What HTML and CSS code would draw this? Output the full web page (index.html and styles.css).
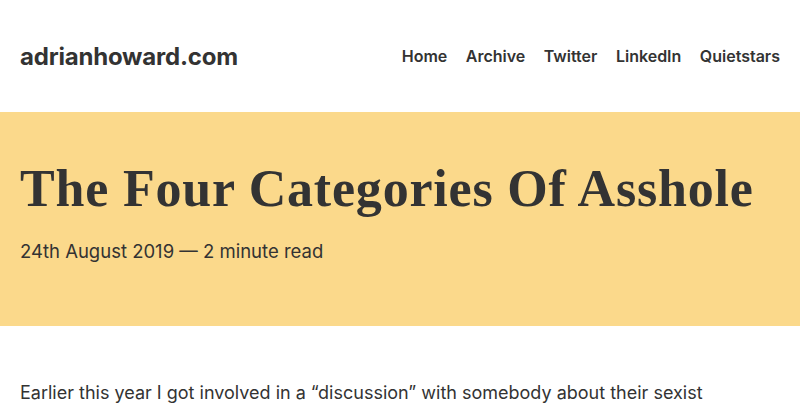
FILE: index.html
```html
<!DOCTYPE html>
<html lang="en">
<head>
<meta charset="utf-8">
<title>The Four Categories Of Asshole</title>
<link rel="stylesheet" href="styles.css">
</head>
<body>
<header class="site-header">
  <a class="logo" href="#">adrianhoward.com</a>
  <nav class="nav">
    <a href="#">Home</a>
    <a href="#">Archive</a>
    <a href="#">Twitter</a>
    <a href="#">LinkedIn</a>
    <a href="#">Quietstars</a>
  </nav>
</header>
<section class="hero">
  <h1 class="title">The Four Categories Of Asshole</h1>
  <p class="meta">24th August 2019 — 2 minute read</p>
</section>
<main class="content">
  <p>Earlier this year I got involved in a “discussion” with somebody about their sexist</p>
</main>
</body>
</html>
```
FILE: styles.css
```css
html, body {
  margin: 0;
  padding: 0;
  background: #fff;
  color: #333;
  font-family: Inter, "Noto Sans", sans-serif;
}
a { color: inherit; text-decoration: none; }
.site-header {
  height: 112px;
  display: flex;
  align-items: center;
  justify-content: space-between;
  padding: 0 20px;
}
.logo {
  font-size: 24px;
  font-weight: 700;
  letter-spacing: -0.2px;
}
.nav {
  display: flex;
  gap: 18.5px;
  font-size: 16px;
  font-weight: 600;
}
.hero {
  background: #fbd98b;
  height: 214px;
  padding: 0 20px;
  box-sizing: border-box;
  padding-top: 47px;
}
.title {
  margin: 0;
  font-family: "Liberation Serif", serif;
  font-size: 52px;
  font-weight: 700;
  line-height: 60px;
  letter-spacing: 0.8px;
  white-space: nowrap;
}
.meta {
  margin: 20px 0 0;
  font-size: 18.5px;
  line-height: 24px;
}
.content {
  padding: 0 20px;
}
.content p {
  margin: 52px 0 0;
  font-size: 18px;
  line-height: 30px;
}
```
